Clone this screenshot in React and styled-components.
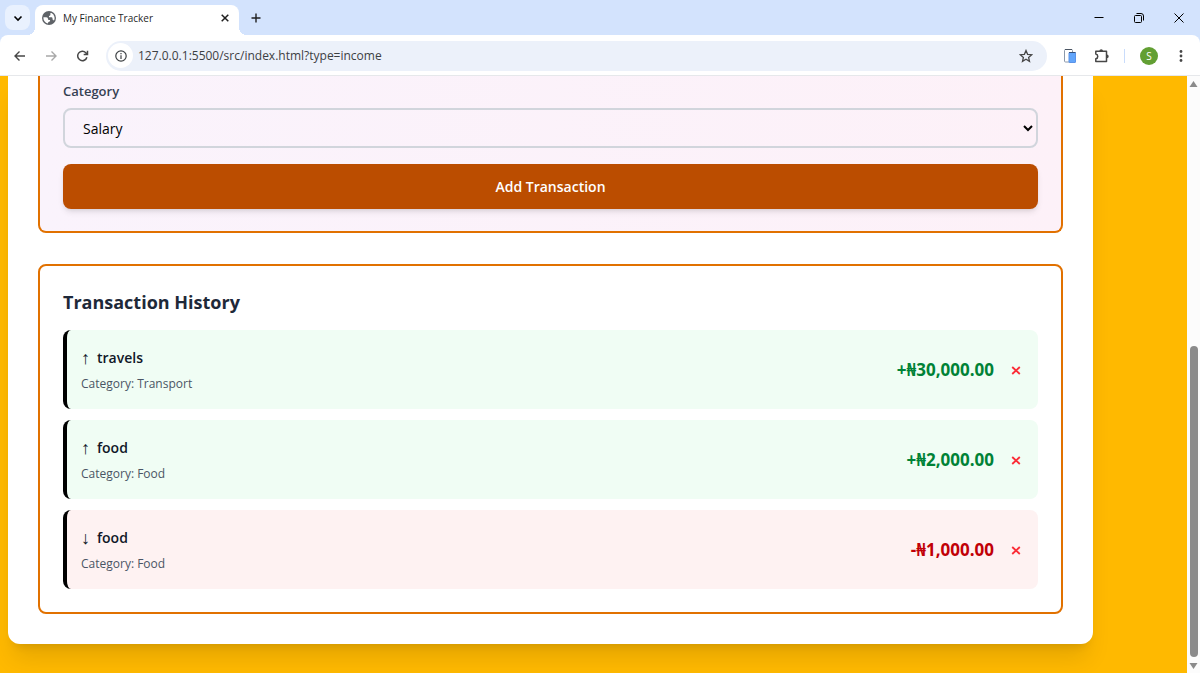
import styled, { createGlobalStyle } from "styled-components";

const GlobalStyle = createGlobalStyle`
  * {
    box-sizing: border-box;
  }
  body {
    margin: 0;
    font-family: "Segoe UI", "Open Sans", "Noto Sans", sans-serif;
    color: #101828;
  }
  button,
  input,
  select {
    font-family: inherit;
  }
  button {
    border: none;
    padding: 0;
    background: none;
    cursor: pointer;
  }
`;

const Window = styled.div`
  height: 100vh;
  display: flex;
  flex-direction: column;
  overflow: hidden;
  background: white;
  border-bottom: 2px solid white;
`;

/* browser tabs */
const TabStrip = styled.header`
  height: 35px;
  flex-shrink: 0;
  display: flex;
  align-items: center;
  background: #d3e3fd;
  padding: 0 1px 0 5px;
`;
const TabSearch = styled.button`
  width: 25px;
  height: 25px;
  border-radius: 8px;
  background: #e9f1fe;
  display: flex;
  align-items: center;
  justify-content: center;
`;
const Tab = styled.div`
  position: relative;
  width: 204px;
  height: 30px;
  align-self: flex-end;
  margin-left: 5px;
  padding: 0 8px 4px 7px;
  display: flex;
  align-items: center;
  gap: 7px;
  background: white;
  border-radius: 8px 8px 0 0;
  font-size: 10px;
  line-height: 16px;
  color: #1f1f1f;

  /* curved feet of the active tab */
  &::before,
  &::after {
    content: "";
    position: absolute;
    bottom: 0;
    width: 8px;
    height: 8px;
  }
  &::before {
    right: 100%;
    background: radial-gradient(circle at 0 0, transparent 8px, white 8px);
  }
  &::after {
    left: 100%;
    background: radial-gradient(circle at 100% 0, transparent 8px, white 8px);
  }
`;
const TabTitle = styled.span`
  flex: 1;
`;
const IconButton = styled.button`
  width: ${(props) => props.$size || 16}px;
  height: ${(props) => props.$size || 16}px;
  flex-shrink: 0;
  display: flex;
  align-items: center;
  justify-content: center;
  color: ${(props) => props.$color || "#1f1f1f"};
`;
const NewTab = styled(IconButton)`
  margin-left: 9px;
`;
const WindowControls = styled.div`
  margin-left: auto;
  display: flex;
`;
const WindowButton = styled.button`
  width: 40px;
  height: 34px;
  display: flex;
  align-items: center;
  justify-content: center;
`;

/* address bar */
const ToolbarBack = styled.div`
  background: #d3e3fd;
  flex-shrink: 0;
`;
const Toolbar = styled.div`
  height: 41px;
  display: flex;
  align-items: center;
  background: white;
  border-bottom: 1px solid #e6e8eb;
  border-radius: 8px 8px 0 0;
  padding: 1px 11px 0 12px;
`;
const NavButtons = styled.div`
  display: flex;
  gap: 15px;
  margin-right: 16px;
`;
const AddressBar = styled.div`
  flex: 1;
  height: 30px;
  display: flex;
  align-items: center;
  gap: 5px;
  padding: 0 14px 0 2px;
  border-radius: 15px;
  background: #ecf1fa;
`;
const SiteInfo = styled(IconButton)`
  border-radius: 50%;
  background: white;
`;
const Url = styled.input`
  flex: 1;
  min-width: 0;
  border: none;
  padding: 0;
  outline: none;
  background: transparent;
  font-size: 12px;
  line-height: 20px;
  color: #3c4043;
`;
const Extensions = styled.div`
  display: flex;
  align-items: center;
  gap: 15px;
  margin-left: 15px;
`;
const Divider = styled.span`
  width: 1px;
  height: 14px;
  background: #c9dcfb;
`;
const Avatar = styled.button`
  width: 18px;
  height: 18px;
  border-radius: 50%;
  background: #629f33;
  color: white;
  font-size: 10px;
  line-height: 18px;
`;

/* page */
const Viewport = styled.div`
  flex: 1;
  min-height: 0;
  display: flex;
`;
const Page = styled.main`
  flex: 1;
  min-width: 0;
  overflow: hidden;
  background: #ffb900;
  padding: 0 94px 29px 8px;
`;
const Card = styled.div`
  background: white;
  padding: 0 30px 30px;
  border-radius: 0 0 12px 12px;
  box-shadow: 0 19px 23px -5px rgba(0, 0, 0, 0.1),
    0 8px 9px -6px rgba(0, 0, 0, 0.1);
`;
const FormPanel = styled.form`
  border: 2px solid #e17100;
  border-top: none;
  border-radius: 0 0 8px 8px;
  padding: 5px 23px 22px;
  margin-bottom: 31px;
  background: linear-gradient(to right, #faf3fc, #fdf1f8);
`;
const Label = styled.label`
  display: block;
  font-size: 13px;
  line-height: 20px;
  font-weight: 600;
  color: #364153;
  margin-bottom: 7px;
`;
const Select = styled.select`
  display: block;
  width: 100%;
  height: 40px;
  padding: 0 14px;
  border: 2px solid #d1d5dc;
  border-radius: 8px;
  background: transparent;
  color: black;
  font-size: 14px;
  margin-bottom: 16px;
`;
const SubmitButton = styled.button`
  display: block;
  width: 100%;
  height: 45px;
  border-radius: 8px;
  background: #bb4d00;
  color: white;
  font-size: 14px;
  font-weight: 600;
  box-shadow: 0 4px 6px -1px rgba(0, 0, 0, 0.1),
    0 2px 4px -2px rgba(0, 0, 0, 0.1);
`;
const HistoryPanel = styled.section`
  border: 2px solid #e17100;
  border-radius: 8px;
  padding: 22px 23px 23px;
`;
const Heading = styled.h2`
  margin: 0 0 14px;
  font-size: 18px;
  line-height: 28px;
  font-weight: 700;
  color: #1e2939;
`;
const List = styled.ul`
  list-style: none;
  margin: 0;
  padding: 0;
  display: flex;
  flex-direction: column;
  gap: 11px;
`;
const Item = styled.li`
  display: flex;
  align-items: center;
  justify-content: space-between;
  padding: 15px 14px;
  border-left: 4px solid black;
  border-radius: 8px;
  background: ${(props) => (props.$income ? "#f0fdf4" : "#fef2f2")};
`;
const ItemTitle = styled.div`
  display: flex;
  align-items: center;
  gap: 7px;
  font-size: 14px;
  line-height: 26px;
  font-weight: 600;
  margin-bottom: 2px;
`;
const Direction = styled.span`
  font-family: "Liberation Sans", sans-serif;
  font-size: 18px;
`;
const ItemCategory = styled.div`
  font-size: 12px;
  line-height: 21px;
  color: #4a5565;
`;
const ItemSide = styled.div`
  display: flex;
  align-items: center;
  gap: 14px;
`;
const Amount = styled.span`
  font-size: 17px;
  line-height: 24px;
  font-weight: 700;
  color: ${(props) => (props.$income ? "#008236" : "#c10007")};
`;

/* scrollbar */
const Scrollbar = styled.div`
  width: 13px;
  display: flex;
  flex-direction: column;
  align-items: center;
  background: #fcfcfc;
  padding: 4px 0 3px;
`;
const Track = styled.div`
  flex: 1;
  width: 8px;
  padding: 4px 0 5px;
  display: flex;
  flex-direction: column;
  justify-content: flex-end;
`;
const Thumb = styled.div`
  height: 55%;
  border-radius: 4px;
  background: #8b8b8b;
`;

const Icon = ({ size = 16, box = 16, width = 1.4, children }) => (
  <svg
    width={size}
    height={size}
    viewBox={`0 0 ${box} ${box}`}
    fill="none"
    stroke="currentColor"
    strokeWidth={width}
    aria-hidden="true"
  >
    {children}
  </svg>
);

const Globe = () => (
  <svg width="14" height="14" viewBox="2 2 20 20" fill="#5f6368" aria-hidden="true">
    <path d="M12 2a10 10 0 1 0 0 20 10 10 0 0 0 0-20zm-1.5 17.8A8 8 0 0 1 4.1 11H8c2 0 2.5 1 2.5 2.5 0 1 1 1.5 2 1.5h1v2c-1.6 0-3 .9-3 2.8zM19 16a2.5 2.5 0 0 0-2-2v-1.5c0-1-1-1.5-2-1.5h-3V9c1.5 0 2-.7 2-2V5h1.5A8 8 0 0 1 19 16z" />
  </svg>
);

const transactions = [
  { id: 1, name: "travels", category: "Transport", type: "income", amount: 30000 },
  { id: 2, name: "food", category: "Food", type: "income", amount: 2000 },
  { id: 3, name: "food", category: "Food", type: "expense", amount: 1000 },
];

const formatAmount = (item) => {
  const sign = item.type === "income" ? "+" : "-";
  return (
    sign +
    "₦" +
    item.amount.toLocaleString("en-US", { minimumFractionDigits: 2 })
  );
};

const Transaction = ({ item }) => {
  const income = item.type === "income";
  return (
    <Item $income={income}>
      <div>
        <ItemTitle>
          <Direction>{income ? "↑" : "↓"}</Direction>
          <span>{item.name}</span>
        </ItemTitle>
        <ItemCategory>Category: {item.category}</ItemCategory>
      </div>
      <ItemSide>
        <Amount $income={income}>{formatAmount(item)}</Amount>
        <IconButton $color="#fb2c36" aria-label="Delete transaction">
          <Icon size={10} box={10} width={1.8}>
            <path d="m1.2 2 7.6 7m0-7-7.6 7" />
          </Icon>
        </IconButton>
      </ItemSide>
    </Item>
  );
};

const Browser = () => (
  <>
    <TabStrip>
      <TabSearch aria-label="Search tabs">
        <Icon size={10} box={10} width={1.6}>
          <path d="M1.5 3.5 5 7l3.5-3.5" />
        </Icon>
      </TabSearch>
      <Tab>
        <Globe />
        <TabTitle>My Finance Tracker</TabTitle>
        <IconButton $size={12} aria-label="Close tab">
          <Icon size={8} box={8} width={1.5}>
            <path d="m.7.7 6.6 6.6m0-6.6L.7 7.3" />
          </Icon>
        </IconButton>
      </Tab>
      <NewTab aria-label="New tab">
        <Icon size={10} box={10}>
          <path d="M5 .5v9M.5 5h9" />
        </Icon>
      </NewTab>
      <WindowControls>
        <WindowButton aria-label="Minimize">
          <Icon size={10} box={10} width={1}>
            <path d="M.5 4.5h9" />
          </Icon>
        </WindowButton>
        <WindowButton aria-label="Restore">
          <Icon size={10} box={10} width={1}>
            <rect x=".5" y="2.5" width="7" height="7" rx="1" />
            <path d="M2.5.5H7A2.5 2.5 0 0 1 9.5 3v4.5" />
          </Icon>
        </WindowButton>
        <WindowButton aria-label="Close">
          <Icon size={10} box={10} width={1}>
            <path d="m.5.5 9 9m0-9-9 9" />
          </Icon>
        </WindowButton>
      </WindowControls>
    </TabStrip>
    <ToolbarBack>
      <Toolbar>
        <NavButtons>
          <IconButton $color="#474747" aria-label="Back">
            <Icon>
              <path d="M13 8H3M7.5 3.5 3 8l4.5 4.5" />
            </Icon>
          </IconButton>
          <IconButton $color="#a8a8a8" aria-label="Forward">
            <Icon>
              <path d="M3 8h10M8.5 3.5 13 8l-4.5 4.5" />
            </Icon>
          </IconButton>
          <IconButton $color="#474747" aria-label="Reload">
            <Icon width={1.5}>
              <path d="M12.9 9.2A4.7 4.7 0 1 1 11.8 4.7L13.3 6.2M13.5 2.7v3.8H9.7" />
            </Icon>
          </IconButton>
        </NavButtons>
        <AddressBar>
          <SiteInfo $size={25} $color="#3c4043" aria-label="Site information">
            <Icon size={12} box={12} width={1.2}>
              <circle cx="6" cy="6" r="5.2" />
              <path d="M6 5.2V9M6 3v1.3" />
            </Icon>
          </SiteInfo>
          <Url
            aria-label="Address"
            defaultValue="127.0.0.1:5500/src/index.html?type=income"
          />
          <IconButton $size={14} $color="#474747" aria-label="Bookmark">
            <Icon size={14} box={14} width={1.3}>
              <path d="m7 1.5 1.6 3.8 4.1.4-3.1 2.7.9 4L7 10.3l-3.5 2.1.9-4L1.3 5.7l4.1-.4z" />
            </Icon>
          </IconButton>
        </AddressBar>
        <Extensions>
          <IconButton aria-label="Device preview">
            <Icon width={1}>
              <rect x="2.5" y="1.5" width="8" height="12.5" rx="1" fill="white" stroke="#8b98aa" />
              <path d="M3 1.5h7" stroke="#4b5563" />
              <rect x="7" y="4.5" width="6.5" height="10" rx=".5" fill="#62a5fb" stroke="#5b93e8" />
              <path d="M7 4.5h6.5" stroke="#35507c" />
            </Icon>
          </IconButton>
          <IconButton $color="#474747" aria-label="Extensions">
            <Icon width={1.5}>
              <path
                d="M2.8 3.3H13.5V13.5H2.8V10.7c2.6-.4 2.6-4.2 0-4.6z"
                strokeLinejoin="round"
              />
              <path
                d="M6.4 3a1.8 1.8 0 0 1 3.6 0zM13.9 6.6a1.8 1.8 0 0 1 0 3.6z"
                fill="currentColor"
                stroke="none"
              />
            </Icon>
          </IconButton>
          <Divider />
          <Avatar aria-label="Profile">S</Avatar>
          <IconButton $color="#474747" aria-label="Menu">
            <svg width="16" height="16" fill="currentColor" aria-hidden="true">
              <circle cx="8" cy="3.5" r="1.4" />
              <circle cx="8" cy="8" r="1.4" />
              <circle cx="8" cy="12.5" r="1.4" />
            </svg>
          </IconButton>
        </Extensions>
      </Toolbar>
    </ToolbarBack>
  </>
);

const App = () => {
  return (
    <Window>
      <GlobalStyle />
      <Browser />
      <Viewport>
        <Page>
          <Card>
            <FormPanel onSubmit={(e) => e.preventDefault()}>
              <Label htmlFor="category">Category</Label>
              <Select id="category" defaultValue="Salary">
                <option>Salary</option>
                <option>Food</option>
                <option>Transport</option>
              </Select>
              <SubmitButton type="submit">Add Transaction</SubmitButton>
            </FormPanel>
            <HistoryPanel>
              <Heading>Transaction History</Heading>
              <List>
                {transactions.map((item) => (
                  <Transaction key={item.id} item={item} />
                ))}
              </List>
            </HistoryPanel>
          </Card>
        </Page>
        <Scrollbar>
          <svg width="9" height="8" fill="#8b8b8b" aria-hidden="true">
            <path d="M4.5 1 8.5 7h-8z" />
          </svg>
          <Track>
            <Thumb />
          </Track>
          <svg width="9" height="8" fill="#8b8b8b" aria-hidden="true">
            <path d="M4.5 7 .5 1h8z" />
          </svg>
        </Scrollbar>
      </Viewport>
    </Window>
  );
};

export default App;
